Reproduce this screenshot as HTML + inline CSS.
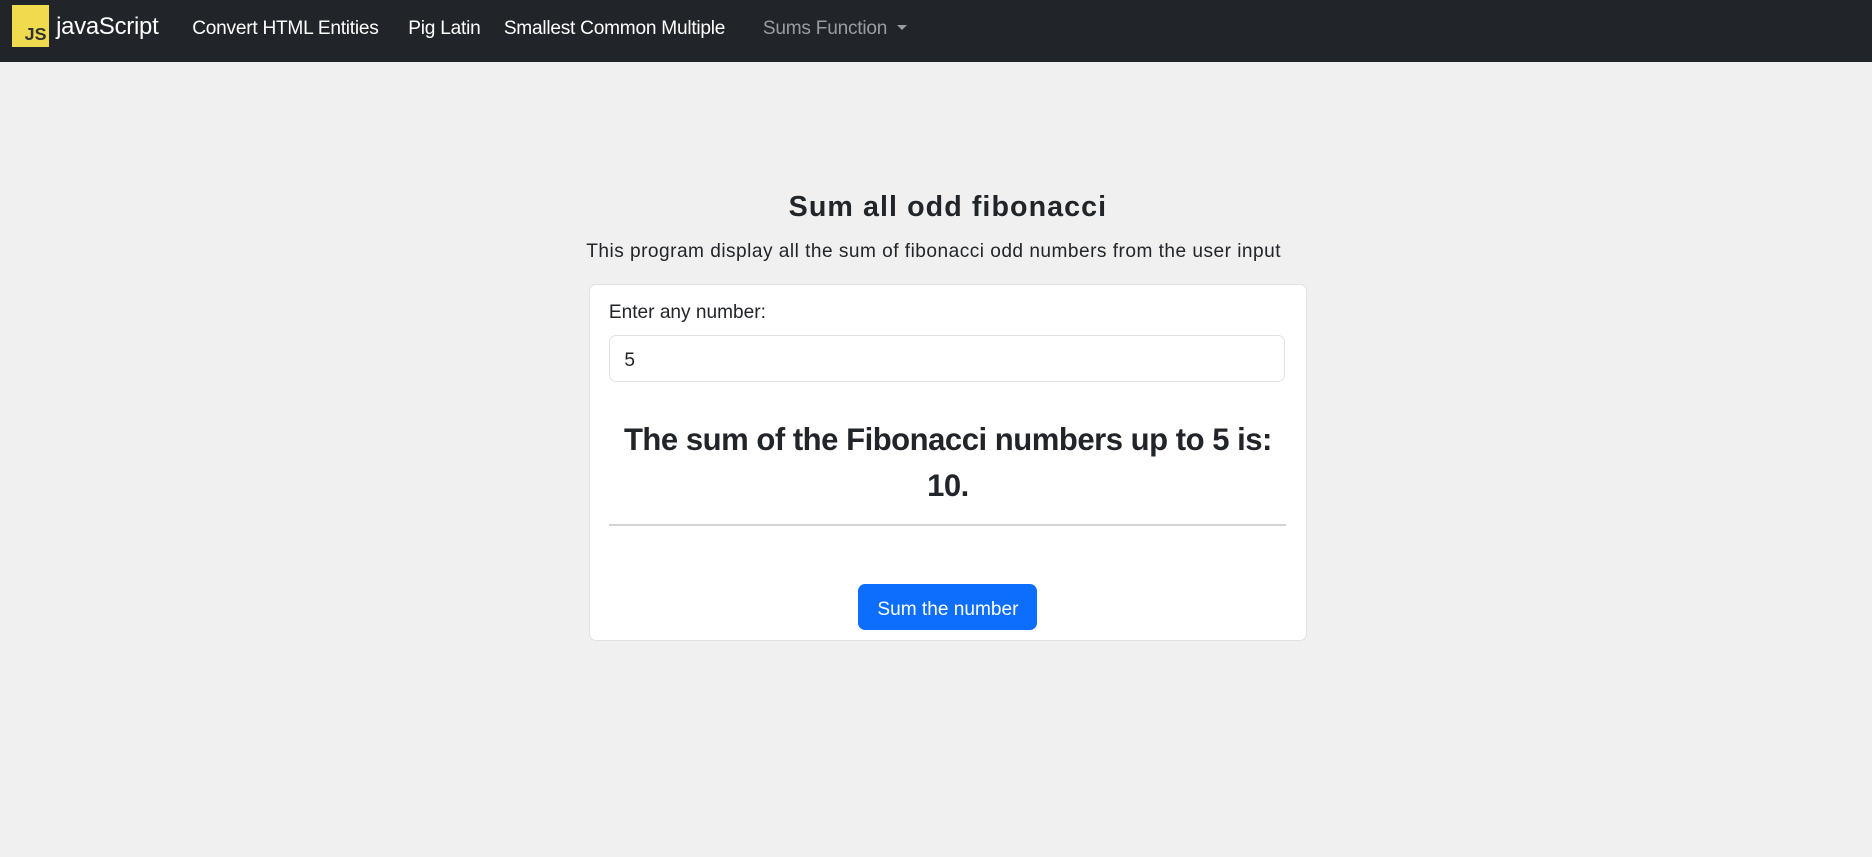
<!DOCTYPE html>
<html><head><meta charset="utf-8"><style>
html,body{margin:0;padding:0}
body{width:1568px;height:718px;zoom:1.19388;background:#f0f0f0;font-family:"Liberation Sans",sans-serif;color:#212529;position:relative;overflow:hidden}
.nav{position:absolute;left:0;top:0;width:1568px;height:52px;background:#212529}
.logo{position:absolute;left:10px;top:4px;width:31px;height:35px;background:#f0db4f}
.logo span{position:absolute;right:2px;bottom:1px;font-weight:bold;font-size:15px;color:#323330}
.a{position:absolute;top:15px;font-size:16px;color:#fff;white-space:nowrap;letter-spacing:-0.2px}
.a.b{font-size:20px;top:11px}
.a.g{color:#9a9da0}
.caret{display:inline-block;margin-left:8px;border-left:5px solid transparent;border-right:5px solid transparent;border-top:5px solid #9a9da0;vertical-align:3px}
.t{position:absolute;left:0;width:1588px;text-align:center;white-space:nowrap}
.card{position:absolute;left:493px;top:238px;width:600px;height:297px;background:#fff;border:1px solid #dee2e6;border-radius:6px}
.in{position:absolute;left:510px;top:281px;width:565px;height:37px;border:1px solid #dee2e6;border-radius:6px;background:#fff}
.btn{position:absolute;left:719px;top:489px;width:150px;height:39px;background:#0d6efd;border-radius:6px;color:#fff;font-size:16px;text-align:center;line-height:43px}
</style></head><body>
<div class="nav">
<div class="logo"><span>JS</span></div>
<div class="a b" style="left:47px">javaScript</div>
<div class="a" style="left:161px">Convert HTML Entities</div>
<div class="a" style="left:342px">Pig Latin</div>
<div class="a" style="left:422px">Smallest Common Multiple</div>
<div class="a g" style="left:639px">Sums Function<span class="caret"></span></div>
</div>
<div class="t" style="top:160px;font-size:24px;font-weight:bold;letter-spacing:0.9px">Sum all odd fibonacci</div>
<div class="t" style="top:202px;left:-12px;font-size:16px;letter-spacing:0.4px">This program display all the sum of fibonacci odd numbers from the user input</div>
<div class="card"></div>
<div style="position:absolute;left:510px;top:253px;font-size:16px">Enter any number:</div>
<div class="in"></div>
<div style="position:absolute;left:523px;top:293px;font-size:16px">5</div>
<div class="t" style="top:349px;font-size:26px;font-weight:bold;line-height:39px;letter-spacing:-0.4px">The sum of the Fibonacci numbers up to 5 is:<br>10.</div>
<div style="position:absolute;left:510px;top:439px;width:567px;height:2px;background:#d3d3d5"></div>
<div class="btn">Sum the number</div>
</body></html>
